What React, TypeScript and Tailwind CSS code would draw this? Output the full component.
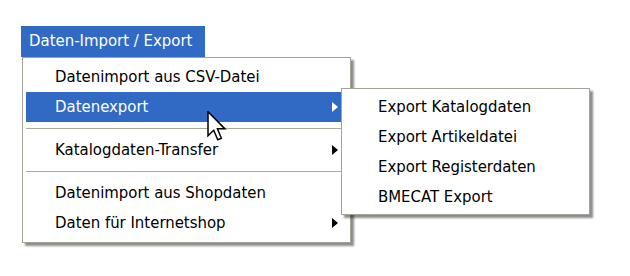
import React from 'react';

type Entry = { label: string; sub?: boolean; active?: boolean } | 'sep';

const entries: Entry[] = [
    { label: 'Datenimport aus CSV-Datei' },
    { label: 'Datenexport', sub: true, active: true },
    'sep',
    { label: 'Katalogdaten-Transfer', sub: true },
    'sep',
    { label: 'Datenimport aus Shopdaten' },
    { label: 'Daten für Internetshop', sub: true },
];

const exportItems = ['Export Katalogdaten', 'Export Artikeldatei', 'Export Registerdaten', 'BMECAT Export'];

const Arrow = ({ white }: { white?: boolean }) => (
    <svg width="6" height="10" viewBox="0 0 6 10" className="mr-[4px]">
        <polygon points="0,0 6,5 0,10" fill={white ? '#ffffff' : '#000000'} />
    </svg>
);

const Cursor = () => (
    <svg width="20" height="30" viewBox="0 0 13 20" className="absolute left-[207px] top-[111px]">
        <polygon
            points="0.5,0.5 0.5,16.5 4.3,12.8 7,19.2 9.4,18.2 6.8,11.9 11.8,11.9"
            fill="#ffffff"
            stroke="#000000"
            strokeWidth="1"
            strokeLinejoin="miter"
        />
    </svg>
);

export default function App() {
    return (
        <div className="relative h-[276px] w-[630px] overflow-hidden bg-white font-['DejaVu_Sans_Condensed','DejaVu_Sans',sans-serif] text-[16.6px] text-black">
            <div className="pl-[21px] pt-[26px]">
                <div className="flex h-[31px] w-[184px] items-center bg-[#316AC5] pl-[8px] text-white">
                    Daten-Import / Export
                </div>

                <div className="relative ml-px w-[329px] border border-[#a5a29a] bg-white pb-[4px] pl-[3px] pr-[8px] pt-[4px] shadow-[3px_3px_2px_rgba(0,0,0,0.45)]">
                    {entries.map((e, i) =>
                        e === 'sep' ? (
                            <div key={i} className="flex h-[13px] items-center">
                                <div className="h-px w-full bg-[#aca899]" />
                            </div>
                        ) : (
                            <div
                                key={i}
                                className={
                                    e.active
                                        ? 'flex h-[30px] items-center justify-between bg-[#316AC5] pl-[29px] text-white'
                                        : 'flex h-[30px] items-center justify-between pl-[29px]'
                                }
                            >
                                <span>{e.label}</span>
                                {e.sub && <Arrow white={e.active} />}
                            </div>
                        )
                    )}

                    <div className="absolute left-[318px] top-[30px] w-[249px] border border-[#a5a29a] bg-white pb-[2px] pt-[3px] shadow-[3px_3px_2px_rgba(0,0,0,0.45)]">
                        {exportItems.map((label) => (
                            <div key={label} className="flex h-[30px] items-center pl-[36px]">
                                {label}
                            </div>
                        ))}
                    </div>
                </div>
            </div>

            <Cursor />
        </div>
    );
}
